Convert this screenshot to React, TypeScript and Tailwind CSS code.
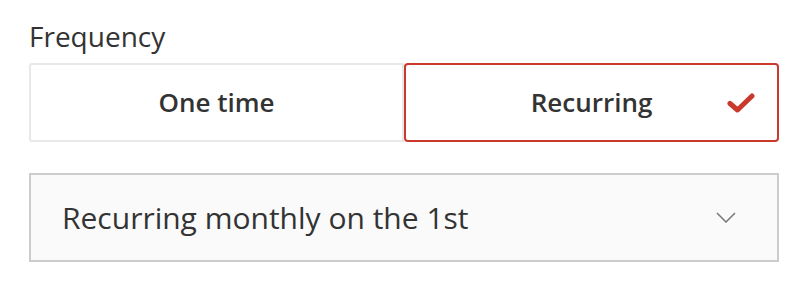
import React from "react";

export default function App() {
  return (
    <div className="w-[806px] h-[294px] bg-white pl-[29px] pt-[18px]" style={{ fontFamily: '"Open Sans", sans-serif' }}>
      <div className="w-[750px]">
        <div className="text-[28px] leading-[36px] text-[#333] mb-[9px]">Frequency</div>
        <div className="flex">
          <button className="w-[375px] h-[79px] border-2 border-[#e8e8e8] rounded-l-[3px] bg-white text-[26px] font-semibold text-[#333] flex items-center justify-center">
            One time
          </button>
          <button className="relative w-[375px] h-[79px] border-2 border-[#c9392c] rounded-[4px] bg-white text-[26px] font-semibold text-[#333] flex items-center justify-center">
            Recurring
            <svg className="absolute right-[22px] top-[27px]" width="28" height="22" viewBox="0 0 28 22">
              <path d="M3 11.5 L10.5 18 L25 4" fill="none" stroke="#c9392c" strokeWidth="5" strokeLinecap="round" strokeLinejoin="round" />
            </svg>
          </button>
        </div>
        <div className="mt-[31px] h-[89px] border-2 border-[#cccccc] bg-[#fafafa] flex items-center justify-between pl-[31px] pr-[41px]">
          <span className="text-[30px] text-[#333]">Recurring monthly on the 1st</span>
          <svg width="20" height="11" viewBox="0 0 20 11">
            <path d="M1 1 L10 10 L19 1" fill="none" stroke="#777" strokeWidth="1.5" />
          </svg>
        </div>
      </div>
    </div>
  );
}
